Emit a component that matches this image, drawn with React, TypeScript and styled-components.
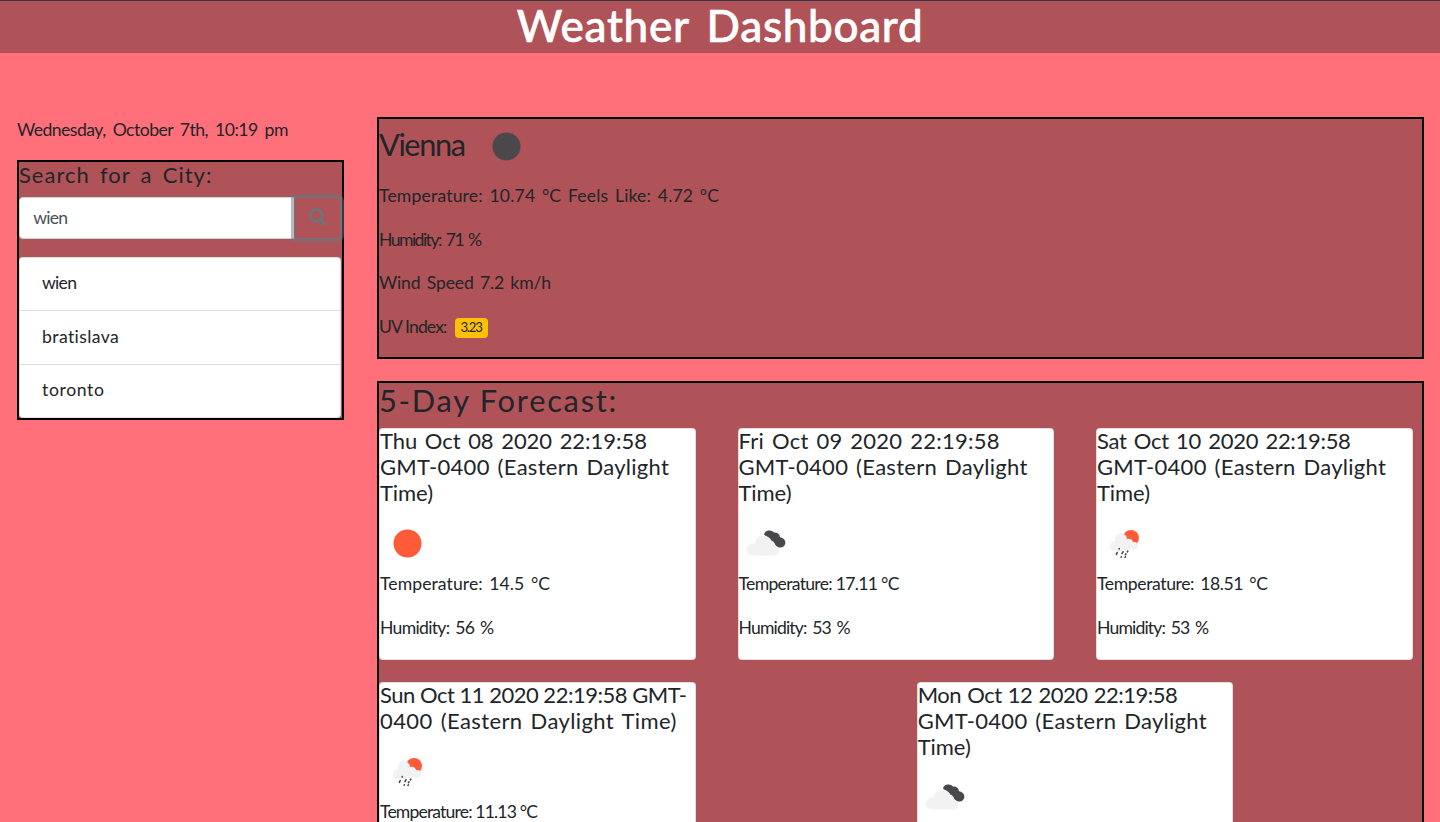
import React from "react";
import styled, { createGlobalStyle } from "styled-components";
import { FaSearch } from "react-icons/fa";

const colors = {
  page: "#ff707a",
  panel: "#af5358",
  ink: "#212529",
  muted: "#6c757d",
};

const GlobalStyle = createGlobalStyle`
  *, *::before, *::after { box-sizing: border-box; }
  html { font-size: 17.6px; }
  body {
    margin: 0;
    height: 822px;
    overflow: hidden;
    background: ${colors.page};
    color: ${colors.ink};
    font-family: Lato, "Open Sans", sans-serif;
    font-size: 1rem;
    line-height: 1.5;
  }
`;

const Header = styled.header`
  display: flow-root;
  height: 53px;
  border-top: 1px solid #343a40;
  background: ${colors.panel};
`;

const Title = styled.h1`
  margin: -2px 0 0;
  color: #fff;
  font-size: 2.5rem;
  font-weight: 500;
  line-height: 1.2;
  text-align: center;
  letter-spacing: 0.7px;
  word-spacing: 6px;
  -webkit-text-stroke: 0.6px #fff;
`;

const Layout = styled.main`
  display: grid;
  grid-template-columns: 327px 1047px;
  column-gap: 33px;
  align-items: start;
  padding: 64px 0 0 17px;
`;

const Sidebar = styled.aside`
  display: flex;
  flex-direction: column;
`;

const Content = styled.div`
  display: flex;
  flex-direction: column;
  gap: 22px;
`;

const Text = styled.span<{ $track?: number; $gap?: number }>`
  letter-spacing: ${(p) => p.$track ?? 0}px;
  word-spacing: ${(p) => p.$gap ?? 0}px;
  white-space: nowrap;
`;

const Paragraph = styled.p`
  margin: 0 0 17.3px;
  height: 1.5rem;
`;

const DateLine = styled(Paragraph)`
  margin-bottom: 16.6px;
`;

const Panel = styled.section`
  border: 2px solid #000;
  background: ${colors.panel};
`;

const SearchPanel = styled(Panel)`
  height: 260px;
  padding-right: 1px;
`;

const SmallHeading = styled.h5`
  margin: 0 0 0.5rem;
  font-size: 1.25rem;
  font-weight: 400;
  line-height: 1.2;
`;

const SearchForm = styled.form`
  display: flex;
  height: 42px;
  margin-bottom: 17.4px;
`;

const SearchInput = styled.input`
  flex: 1;
  min-width: 0;
  padding: 0 13.2px;
  border: 1px solid #ced4da;
  border-radius: 4px 0 0 4px;
  background: #fff;
  color: #495057;
  font: inherit;
  letter-spacing: -0.72px;
  outline: none;
`;

const SearchButton = styled.button`
  position: relative;
  display: flex;
  align-items: center;
  justify-content: center;
  width: 47px;
  margin-left: -1px;
  padding: 0 0 2px;
  border: 1px solid ${colors.muted};
  border-radius: 0 4px 4px 0;
  background: ${colors.panel};
  color: ${colors.muted};
  box-shadow: 0 0 0 3px rgba(108, 117, 125, 0.5);
  font-size: 18px;
`;

const CityList = styled.ul`
  margin: 0;
  padding: 0;
  list-style: none;
  border: 1px solid rgba(0, 0, 0, 0.125);
  border-radius: 4px;
  background: #fff;
`;

const CityItem = styled.li`
  height: 53.6px;
  padding: 12.6px 22px;

  & + & {
    border-top: 1px solid rgba(0, 0, 0, 0.125);
  }

  &:first-child {
    height: 52.6px;
  }
`;

const CurrentPanel = styled(Panel)`
  height: 242px;
`;

const CityHeading = styled.div`
  display: flex;
  align-items: flex-start;
  gap: 14px;
  height: 59px;
  font-size: 1.75rem;
  line-height: 52px;

  & > svg {
    flex: none;
  }
`;

const CurrentDetails = styled.div`
  padding-top: 5px;
`;

const UvBadge = styled.span`
  display: inline-flex;
  align-items: center;
  justify-content: center;
  width: 33px;
  height: 20px;
  margin-left: 8px;
  border-radius: 4px;
  background: #ffc107;
  font-size: 13.2px;
  line-height: 1;
  letter-spacing: -1.2px;
  vertical-align: 1px;
`;

const ForecastPanel = styled(Panel)`
  height: 441px;
  border-bottom: 0;
  overflow: hidden;
`;

const ForecastHeading = styled.h3`
  margin: 0 0 9px;
  font-size: 1.75rem;
  font-weight: 400;
  line-height: 36px;
`;

const CardGrid = styled.div`
  display: grid;
  grid-template-columns: repeat(5, 179.25px) 1fr;
  row-gap: 22px;
`;

const Card = styled.article<{ $span: number }>`
  grid-column: span ${(p) => p.$span};
  width: 316.5px;
  height: 232px;
  border: 1px solid rgba(0, 0, 0, 0.125);
  border-radius: 4px;
  background: #fff;

  & > svg {
    display: block;
  }
`;

const CardTitle = styled.h5`
  display: flex;
  flex-direction: column;
  margin: -1px 0 11px;
  font-size: 1.25rem;
  font-weight: 400;
  line-height: 26px;
`;

const CardLine = styled(Paragraph)`
  margin-top: -1px;
  margin-bottom: 18.5px;
`;

type Weather = "night" | "sun" | "clouds" | "rain";

function WeatherIcon({ kind }: { kind: Weather }) {
  return (
    <svg width="55" height="55" viewBox="0 0 55 55" aria-hidden="true">
      {kind === "night" && <circle cx="27.5" cy="27.5" r="14" fill="#4b484b" />}
      {kind === "sun" && <circle cx="27.5" cy="26.5" r="14" fill="#ff5b38" />}
      {kind === "clouds" && (
        <>
          <path
            d="M25 17.5a5.6 5.2 0 0 1 10-1.9 5.2 5.2 0 0 1 6 4.6c3.200 .6 5.600 2.600 5.400 5.800-.2 3-2.800 4.900-5.600 4.500-2.600-.2-4.600-1.800-5-4.100-2.800.3-4.300-1.200-5.100-3.400-1.800-1-2.900-3.600-5.700-5.500z"
            fill="#48484a"
          />
          <path
            d="M13.800 38.600a6 6 0 0 1-.2-12 5.400 5.400 0 0 1 2-.2 9 9 0 0 1 16.800-2.800 5.800 5.800 0 0 1 3.600 5.200 5 5 0 0 1 .4 9.800z"
            fill="#f2f2f2"
          />
        </>
      )}
      {kind === "rain" && (
        <>
          <circle cx="34" cy="21" r="8" fill="#ff5b38" />
          <path
            d="M17.500 34a4.900 4.900 0 0 1 .8-9.800 5.900 5.900 0 0 1 9.600-6.400c1.600 1 2 2.800 2 4.200 2.600-1 5.400.2 6.300 3 2.800-.6 5 1.300 5 3.700 0 2.200-1.800 3.800-4 3.800-1.800 0-2.900-.4-3.700-1.200-1.800 2.300-5.400 2.800-7.200.7-1.800 2.800-6.400 3.600-8.800 2z"
            fill="#f2f2f2"
          />
          <path
            d="M22.200 31.600v.3M20.200 35.600l-.8 1.700M26 34.800l-1 1.800M30.800 34.200l-.4.6M24.300 39.800l-.2.4M29 36.800l-.6.9M28.300 39.800l-.3.6"
            fill="none"
            stroke="#48484a"
            strokeWidth="1.6"
            strokeLinecap="round"
          />
        </>
      )}
    </svg>
  );
}

interface Label {
  text: string;
  track: number;
  gap?: number;
}

interface Forecast {
  title: Label[];
  weather: Weather;
  temperature?: Label;
  humidity?: Label;
}

const cities: Label[] = [
  { text: "wien", track: -0.72 },
  { text: "bratislava", track: 0.38 },
  { text: "toronto", track: 0.63 },
];

const conditions: Label[] = [
  { text: "Temperature: 10.74 °C Feels Like: 4.72 °C", track: 0.16, gap: 2 },
  { text: "Humidity: 71 %", track: -1.54, gap: 2 },
  { text: "Wind Speed 7.2 km/h", track: -0.16, gap: 2 },
];

const zone: Label[] = [
  { text: "GMT-0400 (Eastern Daylight", track: 0.29, gap: 2 },
  { text: "Time)", track: -0.07 },
];

const forecasts: Forecast[] = [
  {
    title: [{ text: "Thu Oct 08 2020 22:19:58", track: -0.04, gap: 2 }, ...zone],
    weather: "sun",
    temperature: { text: "Temperature: 14.5 °C", track: 0.07, gap: 2 },
    humidity: { text: "Humidity: 56 %", track: -0.7, gap: 2 },
  },
  {
    title: [{ text: "Fri Oct 09 2020 22:19:58", track: 0.25, gap: 2 }, ...zone],
    weather: "clouds",
    temperature: { text: "Temperature: 17.11 °C", track: -0.7 },
    humidity: { text: "Humidity: 53 %", track: -0.85, gap: 2 },
  },
  {
    title: [{ text: "Sat Oct 10 2020 22:19:58", track: -0.31, gap: 2 }, ...zone],
    weather: "rain",
    temperature: { text: "Temperature: 18.51 °C", track: -0.4, gap: 2 },
    humidity: { text: "Humidity: 53 %", track: -0.85, gap: 2 },
  },
  {
    title: [
      { text: "Sun Oct 11 2020 22:19:58 GMT-", track: -0.49 },
      { text: "0400 (Eastern Daylight Time)", track: 0.4, gap: 2 },
    ],
    weather: "rain",
    temperature: { text: "Temperature: 11.13 °C", track: -0.85 },
  },
  {
    title: [{ text: "Mon Oct 12 2020 22:19:58", track: -0.49, gap: 1 }, ...zone],
    weather: "clouds",
  },
];

function ForecastCard({ day, span }: { day: Forecast; span: number }) {
  const readings = [day.temperature, day.humidity].filter((r): r is Label => Boolean(r));
  return (
    <Card $span={span}>
      <CardTitle>
        {day.title.map((line) => (
          <Text key={line.text} $track={line.track} $gap={line.gap}>
            {line.text}
          </Text>
        ))}
      </CardTitle>
      <WeatherIcon kind={day.weather} />
      {readings.map((line) => (
        <CardLine key={line.text}>
          <Text $track={line.track} $gap={line.gap}>
            {line.text}
          </Text>
        </CardLine>
      ))}
    </Card>
  );
}

export default function App() {
  return (
    <>
      <GlobalStyle />
      <Header>
        <Title>Weather Dashboard</Title>
      </Header>
      <Layout>
        <Sidebar>
          <DateLine>
            <Text $track={-0.52} $gap={3}>
              Wednesday, October 7th, 10:19 pm
            </Text>
          </DateLine>
          <SearchPanel>
            <SmallHeading>
              <Text $track={1} $gap={3.6}>
                Search for a City:
              </Text>
            </SmallHeading>
            <SearchForm onSubmit={(event) => event.preventDefault()}>
              <SearchInput defaultValue="wien" aria-label="City" />
              <SearchButton type="submit" aria-label="Search">
                <FaSearch />
              </SearchButton>
            </SearchForm>
            <CityList>
              {cities.map((city) => (
                <CityItem key={city.text}>
                  <Text $track={city.track}>{city.text}</Text>
                </CityItem>
              ))}
            </CityList>
          </SearchPanel>
        </Sidebar>
        <Content>
          <CurrentPanel>
            <CityHeading>
              <Text $track={-1.44}>Vienna</Text>
              <WeatherIcon kind="night" />
            </CityHeading>
            <CurrentDetails>
              {conditions.map((line) => (
                <Paragraph key={line.text}>
                  <Text $track={line.track} $gap={line.gap}>
                    {line.text}
                  </Text>
                </Paragraph>
              ))}
              <Paragraph>
                <Text $track={-0.89}>UV Index:</Text>
                <UvBadge>3.23</UvBadge>
              </Paragraph>
            </CurrentDetails>
          </CurrentPanel>
          <ForecastPanel>
            <ForecastHeading>
              <Text $track={1.75}>5-Day Forecast:</Text>
            </ForecastHeading>
            <CardGrid>
              {forecasts.map((day, index) => (
                <ForecastCard key={day.title[0].text} day={day} span={index < 3 ? 2 : 3} />
              ))}
            </CardGrid>
          </ForecastPanel>
        </Content>
      </Layout>
    </>
  );
}
